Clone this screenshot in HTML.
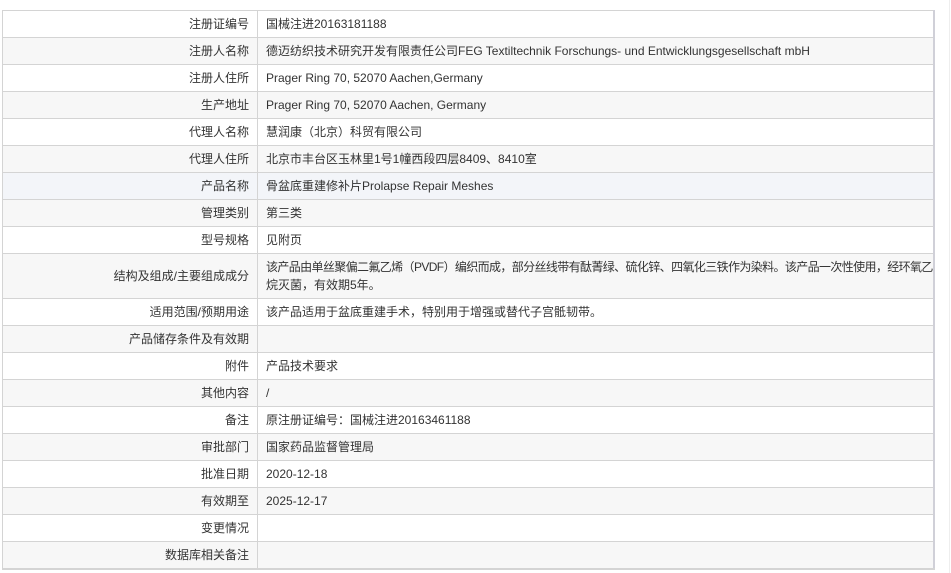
<!DOCTYPE html>
<html><head><meta charset="utf-8"><style>
html,body{margin:0;padding:0;background:#fff;width:951px;height:573px;overflow:hidden}
body{font-family:"Liberation Sans","Noto Sans CJK SC",sans-serif;font-size:12px;color:#333}
table{position:absolute;left:2px;top:10px;width:933px;table-layout:fixed;border-collapse:collapse;border:1px solid #d4d4d4;border-right:2px solid #d0d0d8;border-bottom:2px solid #d4d4d4}
td{border-top:1px solid #d4d4d4;height:26px;padding:0 8px;line-height:18px;vertical-align:middle;overflow:hidden}
td.l{text-align:right;border-right:1px solid #d4d4d4;padding-right:8px}
tr:nth-child(even) td{background:#f7f7f7}
tr.h td{background:#f3f5f9}
tr.t td{height:44px}
.nw{white-space:nowrap;letter-spacing:-0.62px}
.sb{position:absolute;left:949px;top:0;width:1px;height:573px;background:#eee}
</style></head><body>
<table>
<colgroup><col style="width:255px"><col></colgroup>
<tr><td class="l">注册证编号</td><td>国械注进20163181188</td></tr>
<tr><td class="l">注册人名称</td><td>德迈纺织技术研究开发有限责任公司FEG Textiltechnik Forschungs- und Entwicklungsgesellschaft mbH</td></tr>
<tr><td class="l">注册人住所</td><td>Prager Ring 70, 52070 Aachen,Germany</td></tr>
<tr><td class="l">生产地址</td><td>Prager Ring 70, 52070 Aachen, Germany</td></tr>
<tr><td class="l">代理人名称</td><td>慧润康（北京）科贸有限公司</td></tr>
<tr><td class="l">代理人住所</td><td>北京市丰台区玉林里1号1幢西段四层8409、8410室</td></tr>
<tr class="h"><td class="l">产品名称</td><td>骨盆底重建修补片Prolapse Repair Meshes</td></tr>
<tr><td class="l">管理类别</td><td>第三类</td></tr>
<tr><td class="l">型号规格</td><td>见附页</td></tr>
<tr class="t"><td class="l">结构及组成/主要组成成分</td><td><span class="nw">该产品由单丝聚偏二氟乙烯（PVDF）编织而成，部分丝线带有酞菁绿、硫化锌、四氧化三铁作为染料。该产品一次性使用，经环氧乙</span><br>烷灭菌，有效期5年。</td></tr>
<tr><td class="l">适用范围/预期用途</td><td>该产品适用于盆底重建手术，特别用于增强或替代子宫骶韧带。</td></tr>
<tr><td class="l">产品储存条件及有效期</td><td></td></tr>
<tr><td class="l">附件</td><td>产品技术要求</td></tr>
<tr><td class="l">其他内容</td><td>/</td></tr>
<tr><td class="l">备注</td><td>原注册证编号：国械注进20163461188</td></tr>
<tr><td class="l">审批部门</td><td>国家药品监督管理局</td></tr>
<tr><td class="l">批准日期</td><td>2020-12-18</td></tr>
<tr><td class="l">有效期至</td><td>2025-12-17</td></tr>
<tr><td class="l">变更情况</td><td></td></tr>
<tr><td class="l">数据库相关备注</td><td></td></tr>
</table>
<div class="sb"></div>
</body></html>
